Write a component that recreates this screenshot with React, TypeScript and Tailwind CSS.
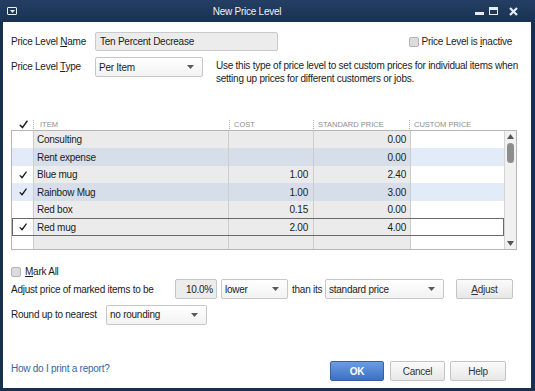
import React from "react";

const Check = ({ size = 9 }: { size?: number }) => (
  <svg width={size} height={size} viewBox="0 0 9 9">
    <path d="M1.2 5.2 L3.4 7.6 L8 1.2" stroke="#1e1e1e" strokeWidth="1.5" fill="none" strokeLinecap="round" strokeLinejoin="round" />
  </svg>
);

const Caret = () => (
  <svg width="7" height="4" viewBox="0 0 7 4">
    <path d="M0 0 H7 L3.5 4 Z" fill="#5a5a5a" />
  </svg>
);

const Select = ({ text, w }: { text: string; w: string }) => (
  <div className={`${w} shrink-0 h-[20px] border border-[#c7c7c7] rounded-[2px] bg-linear-to-b from-white to-[#f2f2f2] flex items-center justify-between pl-[3px] pr-[8px]`}>
    <span>{text}</span>
    <Caret />
  </div>
);

const Box = () => <div className="w-[10px] h-[10px] shrink-0 rounded-[2px] border border-[#b3b3b3] bg-[#dcdcdc]" />;

type Row = { name: string; checked: boolean; cost: string; std: string; blue: boolean; sel?: boolean; h: string };
const rows: Row[] = [
  { name: "Consulting", checked: false, cost: "", std: "0.00", blue: false, h: "h-[17px]" },
  { name: "Rent expense", checked: false, cost: "", std: "0.00", blue: true, h: "h-[18px]" },
  { name: "Blue mug", checked: true, cost: "1.00", std: "2.40", blue: false, h: "h-[17px]" },
  { name: "Rainbow Mug", checked: true, cost: "1.00", std: "3.00", blue: true, h: "h-[18px]" },
  { name: "Red box", checked: false, cost: "0.15", std: "0.00", blue: false, h: "h-[17px]" },
  { name: "Red mug", checked: true, cost: "2.00", std: "4.00", blue: false, sel: true, h: "h-[18px]" },
];

export default function App() {
  return (
    <div className="w-[535px] h-[391px] bg-[#17304f] flex flex-col whitespace-nowrap font-['Liberation_Sans',Arial,sans-serif] text-[10px] tracking-[-0.25px] text-[#1c1c1c]">
      {/* Title bar */}
      <div className="h-[22px] flex items-center bg-linear-to-b from-[#243f63] to-[#183253]">
        <div className="pl-[7px] w-[20px]">
          <div className="w-[10px] h-[8px] border border-[#e8eef5] rounded-[1px] flex items-center justify-center">
            <svg width="5" height="3" viewBox="0 0 5 3"><path d="M0 0 H5 L2.5 3 Z" fill="#e8eef5" /></svg>
          </div>
        </div>
        <div className="flex-1 text-center text-[10px] text-[#eef2f7]">New Price Level</div>
        <div className="w-[61px] flex items-center gap-[5px] pl-[1px]">
          <div className="w-[9px] h-[8px] flex items-end"><div className="w-[9px] h-[3px] bg-[#e6ecf3]" /></div>
          <div className="w-[9px] h-[8px] border border-[#e6ecf3] border-t-[3px]" />
          <svg width="9" height="9" viewBox="0 0 9 9" className="ml-[6px]"><path d="M1 1 L8 8 M8 1 L1 8" stroke="#e6ecf3" strokeWidth="2.2" /></svg>
        </div>
      </div>

      {/* Body */}
      <div className="flex-1 ml-[3px] mr-[4px] mb-[3px] bg-white flex flex-col pt-[10px] pl-[8px] pr-[14px] pb-[7px]">
        {/* Row 1 */}
        <div className="flex items-center h-[19px]">
          <div className="w-[84px] shrink-0"><span>Price Level <u>N</u>ame</span></div>
          <div className="w-[183px] shrink-0 h-[19px] border border-[#cacaca] rounded-[2px] bg-[#ececec] flex items-center pl-[4px]">Ten Percent Decrease</div>
          <div className="ml-auto flex items-center gap-[3px] mr-[5px]">
            <Box />
            <span>Price Level is <u>i</u>nactive</span>
          </div>
        </div>
        {/* Row 2 */}
        <div className="flex items-start mt-[6px]">
          <div className="w-[84px] shrink-0 h-[19px] flex items-center"><span>Price Level <u>T</u>ype</span></div>
          <Select text="Per Item" w="w-[108px]" />
          <div className="ml-[13px] mt-[3px] leading-[12.5px]">
            Use this type of price level to set custom prices for individual items when<br />
            setting up prices for different customers or jobs.
          </div>
        </div>

        {/* Table header */}
        <div className="flex items-center h-[12px] mt-[33px] text-[7.5px] text-[#8e8e8e] tracking-normal">
          <div className="w-[22px] shrink-0 flex justify-end pr-[5px]"><Check size={9} /></div>
          <div className="w-[196px] shrink-0 border-l border-dotted border-[#b0b0b0] pl-[6px] leading-[9px]">ITEM</div>
          <div className="w-[84px] shrink-0 border-l border-dotted border-[#b0b0b0] pl-[4px] leading-[9px]">COST</div>
          <div className="w-[96px] shrink-0 border-l border-dotted border-[#b0b0b0] pl-[4px] leading-[9px]">STANDARD PRICE</div>
          <div className="w-[95px] shrink-0 border-l border-dotted border-[#b0b0b0] pl-[4px] leading-[9px]">CUSTOM PRICE</div>
        </div>

        {/* Table body */}
        <div className="w-[506px] h-[120px] border border-[#b7b7b7] flex">
          <div className="w-[492px] flex flex-col">
            {rows.map((r) => (
              <div key={r.name} className={`flex shrink-0 ${r.h} ${r.sel ? "outline outline-[#6a6a6a] -outline-offset-1" : ""}`}>
                <div className={`w-[21px] shrink-0 flex items-center justify-center ${r.blue ? "bg-[#e2ebf7]" : "bg-white"}`}>
                  {r.checked && <Check size={8} />}
                </div>
                <div className={`w-[195px] shrink-0 border-l border-[#cdcdcd] flex items-center pl-[3px] ${r.blue ? "bg-[#d5dee9]" : "bg-[#ebebeb]"}`}>{r.name}</div>
                <div className={`w-[85px] shrink-0 border-l border-[#cdcdcd] flex items-center justify-end pr-[5px] ${r.blue ? "bg-[#d5dee9]" : "bg-[#ebebeb]"}`}>{r.cost}</div>
                <div className={`w-[97px] shrink-0 border-l border-[#cdcdcd] flex items-center justify-end pr-[4px] ${r.blue ? "bg-[#d5dee9]" : "bg-[#ebebeb]"}`}>{r.std}</div>
                <div className={`w-[94px] shrink-0 border-l border-[#cdcdcd] ${r.blue ? "bg-[#e2ecf9]" : "bg-white"}`} />
              </div>
            ))}
            <div className="flex flex-1">
              <div className="w-[21px] shrink-0 bg-white" />
              <div className="w-[195px] shrink-0 border-l border-[#cdcdcd] bg-[#ebebeb]" />
              <div className="w-[85px] shrink-0 border-l border-[#cdcdcd] bg-[#ebebeb]" />
              <div className="w-[97px] shrink-0 border-l border-[#cdcdcd] bg-[#ebebeb]" />
              <div className="w-[94px] shrink-0 border-l border-[#cdcdcd] bg-white" />
            </div>
          </div>
          <div className="w-[12px] shrink-0 border-l border-[#d4d4d4] bg-[#f1f1f1] flex flex-col items-center pt-[3px] pb-[3px]">
            <svg width="7" height="5" viewBox="0 0 7 5"><path d="M0 5 H7 L3.5 0 Z" fill="#555" /></svg>
            <div className="w-[7px] h-[20px] rounded-full bg-[#8d8d8d] mt-[4px]" />
            <div className="flex-1" />
            <svg width="7" height="5" viewBox="0 0 7 5"><path d="M0 0 H7 L3.5 5 Z" fill="#555" /></svg>
          </div>
        </div>

        {/* Mark all */}
        <div className="flex items-center gap-[4px] h-[11px] mt-[16px]">
          <Box />
          <span><u>M</u>ark All</span>
        </div>

        {/* Adjust row */}
        <div className="flex items-center h-[20px] mt-[2px]">
          <div className="w-[164px] shrink-0">Adjust price of marked items to be</div>
          <div className="w-[42px] shrink-0 h-[20px] border border-[#c7c7c7] rounded-[2px] bg-[#ececec] flex items-center justify-end pr-[3px]">10.0%</div>
          <div className="ml-[4px]"><Select text="lower" w="w-[67px]" /></div>
          <div className="w-[37px] shrink-0 pl-[4px]">than its</div>
          <Select text="standard price" w="w-[119px]" />
          <div className="ml-[12px] w-[57px] shrink-0 h-[20px] border border-[#c4c4c4] rounded-[2px] bg-linear-to-b from-[#fbfbfb] to-[#e7e7e7] flex items-center justify-center text-[#333]"><span><u>A</u>djust</span></div>
        </div>

        {/* Round row */}
        <div className="flex items-center h-[19px] mt-[6px]">
          <div className="w-[95px] shrink-0">Round up to nearest</div>
          <Select text="no rounding" w="w-[101px]" />
        </div>

        <div className="flex-1" />

        {/* Footer */}
        <div className="flex items-start pr-[11px]">
          <div className="text-[#3466a6]">How do I print a report?</div>
          <div className="ml-auto flex">
            <div className="w-[54px] h-[20px] rounded-[2px] border border-[#3462a6] bg-linear-to-b from-[#6c9de2] to-[#3c70c4] text-white font-bold flex items-center justify-center">OK</div>
            <div className="ml-[6px] w-[55px] h-[20px] rounded-[2px] border border-[#c4c4c4] bg-linear-to-b from-[#fbfbfb] to-[#e7e7e7] text-[#333] flex items-center justify-center">Cancel</div>
            <div className="ml-[5px] w-[56px] h-[20px] rounded-[2px] border border-[#c4c4c4] bg-linear-to-b from-[#fbfbfb] to-[#e7e7e7] text-[#333] flex items-center justify-center">Help</div>
          </div>
        </div>
      </div>
    </div>
  );
}
